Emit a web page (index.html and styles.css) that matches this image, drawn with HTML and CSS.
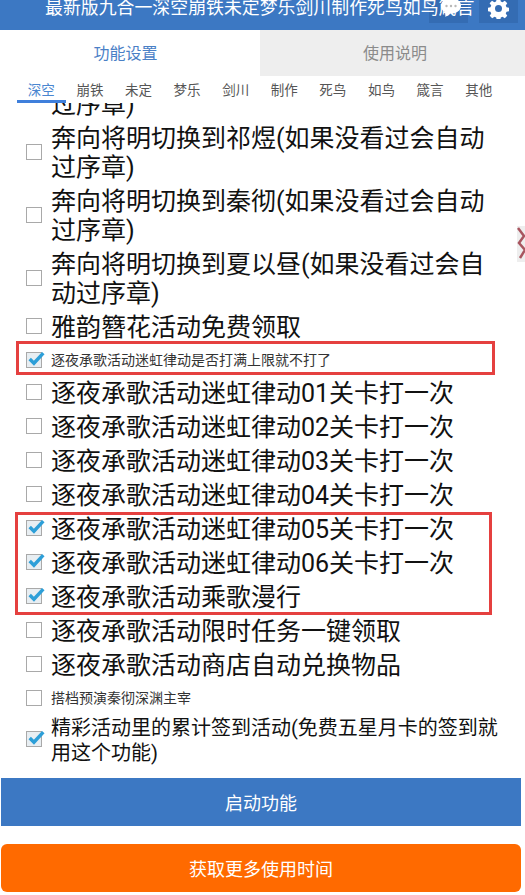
FILE: index.html
```html
<!DOCTYPE html>
<html lang="zh">
<head>
<meta charset="utf-8">
<title>功能设置</title>
<link rel="stylesheet" href="styles.css">
</head>
<body>
<div class="app">
  <header class="header">
    <div class="title">最新版九合一深空崩铁未定梦乐剑川制作死鸟如鸟箴言</div>
    <button class="head-btn chat-btn" aria-label="消息"></button>
    <svg class="bubble" viewBox="0 0 22 20"><path d="M11 0C5 0 1 3.4 1 7.8c0 2.7 1.500 5 4 6.400L5.500 19l4.400-3.400c.4 0 .7.100 1.100.100 6 0 10-3.500 10-7.900S17 0 11 0z" fill="#fff"/><circle cx="6.500" cy="8" r="1.200" fill="#b9b9b9"/><circle cx="11" cy="8" r="1.200" fill="#b9b9b9"/><circle cx="15.500" cy="8" r="1.200" fill="#b9b9b9"/></svg>
    <button class="head-btn gear-btn" aria-label="设置">
      <svg class="gear" viewBox="0 0 24 24"><path fill-rule="evenodd" fill="#fff" d="M10 1h4l.6 3 2 .9 2.600-1.700 2.800 2.800-1.700 2.600.9 2 3 .6v4l-3 .6-.9 2 1.700 2.600-2.800 2.800-2.600-1.700-2 .9-.6 3h-4l-.6-3-2-.9-2.600 1.700-2.800-2.800 1.700-2.600-.9-2-3-.6v-4l3-.6.9-2L1.800 6 4.600 3.200l2.600 1.700 2-.9zM12 8a4 4 0 1 0 0 8 4 4 0 0 0 0-8z"/></svg>
    </button>
  </header>

  <nav class="tabs">
    <div class="tab active">功能设置</div>
    <div class="tab other">使用说明</div>
  </nav>

  <nav class="subtabs">
    <span class="subtab current">深空</span>
    <span class="subtab">崩铁</span>
    <span class="subtab">未定</span>
    <span class="subtab">梦乐</span>
    <span class="subtab">剑川</span>
    <span class="subtab">制作</span>
    <span class="subtab">死鸟</span>
    <span class="subtab">如鸟</span>
    <span class="subtab">箴言</span>
    <span class="subtab">其他</span>
  </nav>

  <main class="viewport">
    <div class="list">
      <label class="row"><span class="box"></span><span class="text">奔向将明切换到黎深(如果没看过会自动过序章)</span></label>
      <label class="row"><span class="box"></span><span class="text">奔向将明切换到祁煜(如果没看过会自动过序章)</span></label>
      <label class="row"><span class="box"></span><span class="text">奔向将明切换到秦彻(如果没看过会自动过序章)</span></label>
      <label class="row"><span class="box"></span><span class="text">奔向将明切换到夏以昼(如果没看过会自动过序章)</span></label>
      <label class="row"><span class="box"></span><span class="text">雅韵簪花活动免费领取</span></label>
      <label class="row small"><span class="box on"><svg class="tick" viewBox="0 0 20 18"><path d="M2 9l5 5L18 2" /></svg></span><span class="text">逐夜承歌活动迷虹律动是否打满上限就不打了</span></label>
      <label class="row"><span class="box"></span><span class="text">逐夜承歌活动迷虹律动01关卡打一次</span></label>
      <label class="row"><span class="box"></span><span class="text">逐夜承歌活动迷虹律动02关卡打一次</span></label>
      <label class="row"><span class="box"></span><span class="text">逐夜承歌活动迷虹律动03关卡打一次</span></label>
      <label class="row"><span class="box"></span><span class="text">逐夜承歌活动迷虹律动04关卡打一次</span></label>
      <label class="row"><span class="box on"><svg class="tick" viewBox="0 0 20 18"><path d="M2 9l5 5L18 2" /></svg></span><span class="text">逐夜承歌活动迷虹律动05关卡打一次</span></label>
      <label class="row"><span class="box on"><svg class="tick" viewBox="0 0 20 18"><path d="M2 9l5 5L18 2" /></svg></span><span class="text">逐夜承歌活动迷虹律动06关卡打一次</span></label>
      <label class="row"><span class="box on"><svg class="tick" viewBox="0 0 20 18"><path d="M2 9l5 5L18 2" /></svg></span><span class="text">逐夜承歌活动乘歌漫行</span></label>
      <label class="row"><span class="box"></span><span class="text">逐夜承歌活动限时任务一键领取</span></label>
      <label class="row"><span class="box"></span><span class="text">逐夜承歌活动商店自动兑换物品</span></label>
      <label class="row small"><span class="box"></span><span class="text">搭档预演秦彻深渊主宰</span></label>
      <label class="row medium"><span class="box on"><svg class="tick" viewBox="0 0 20 18"><path d="M2 9l5 5L18 2" /></svg></span><span class="text">精彩活动里的累计签到活动(免费五星月卡的签到就用这个功能)</span></label>
    </div>
    <svg class="edge-mark" viewBox="0 0 8 36"><path d="M1 2l6 8-5 7 6 7-5 8" /></svg>
  </main>

  <button class="action start">启动功能</button>
  <button class="action more">获取更多使用时间</button>

  <div class="mark mark-one"></div>
  <div class="mark mark-two"></div>
</div>
</body>
</html>
```

FILE: styles.css
```css
* { box-sizing: border-box; }
html, body { margin: 0; padding: 0; background: #fff; }
body { font-family: Roboto, "Noto Sans CJK SC", "Noto Sans", sans-serif; }

.app {
  position: relative;
  width: 525px;
  height: 895px;
  display: flex;
  flex-direction: column;
  overflow: hidden;
}

.header {
  position: relative;
  flex: none;
  height: 30px;
  background: #3c78c3;
  display: flex;
  justify-content: flex-end;
  gap: 11px;
  padding-right: 7px;
}
.title {
  position: absolute;
  z-index: 1;
  left: 45px;
  top: -5px;
  font-size: 17.900px;
  line-height: 26px;
  color: #fff;
  white-space: nowrap;
}
.head-btn {
  position: relative;
  width: 39px;
  height: 23px;
  border: 0;
  padding: 0;
  background: #346cb3;
  display: flex;
  align-items: center;
  justify-content: center;
}
.gear { width: 21px; height: 21px; margin-top: -6px; }
.bubble {
  position: absolute;
  z-index: 2;
  left: 440px;
  top: -2px;
  width: 22px;
  height: 20px;
}

.tabs { flex: none; height: 46px; display: flex; }
.tab {
  display: flex;
  align-items: center;
  justify-content: center;
  padding-bottom: 2px;
  font-size: 16px;
  color: #8b8b8b;
  background: #eee;
}
.tab.active { width: 260px; padding-right: 9px; color: #4a80c6; background: #fff; }
.tab.other { flex: 1; padding-left: 5px; }

.subtabs {
  position: relative;
  z-index: 1;
  flex: none;
  height: 27px;
  display: flex;
  padding-left: 17px;
  background: #fff;
}
.subtab {
  width: 48.600px;
  height: 27px;
  text-align: center;
  font-size: 13.500px;
  line-height: 28px;
  color: #555;
}
.subtab.current {
  color: #4a86d0;
  border-bottom: 3px solid #3f7fdb;
}

.viewport { position: relative; flex: 1; min-height: 0; overflow: hidden; }
.list {
  display: flex;
  flex-direction: column;
  gap: 5px;
  margin-top: -43.500px;
  padding-left: 26px;
}
.row {
  display: flex;
  align-items: center;
  gap: 9px;
  font-size: 25px;
  line-height: 29px;
  color: #111;
}
.text { width: 450px; padding-top: 1px; margin-bottom: -1px; }
.row.small { font-size: 14px; line-height: 20px; min-height: 27px; color: #333; }
.row.small .box { margin-top: 2px; }
.row.medium { font-size: 20px; line-height: 25px; }
.row.medium .box { margin-top: -4px; }
.row.medium .text { padding-top: 0; margin-bottom: 0; }

.box {
  position: relative;
  flex: none;
  width: 16px;
  height: 16px;
  border: 1px solid #a9a9a9;
  background: #fff;
}
.box.on { background: #e8eef2; }
.tick {
  position: absolute;
  left: 1px;
  top: -2px;
  width: 17px;
  height: 16px;
  overflow: visible;
}
.tick path { fill: none; stroke: #2d9fd8; stroke-width: 4; }

.edge-mark {
  position: absolute;
  right: 0;
  top: 123px;
  width: 8px;
  height: 36px;
  background: #eee;
}
.edge-mark path { fill: none; stroke: #a8555f; stroke-width: 2.500; }

.action {
  flex: none;
  display: block;
  width: 520px;
  height: 48px;
  margin: 0 0 0 1px;
  border: 0;
  padding: 0;
  font-family: inherit;
  font-size: 18px;
  color: #fff;
}
.start { background: #3c78c3; }
.more { background: #ff6a00; border-radius: 6px; margin-top: 18px; margin-bottom: 3px; }

.mark {
  position: absolute;
  border: 3px solid #e5403f;
  pointer-events: none;
}
.mark-one { left: 16px; top: 341px; width: 479px; height: 34px; }
.mark-two { left: 15px; top: 512px; width: 477px; height: 103px; }
```
